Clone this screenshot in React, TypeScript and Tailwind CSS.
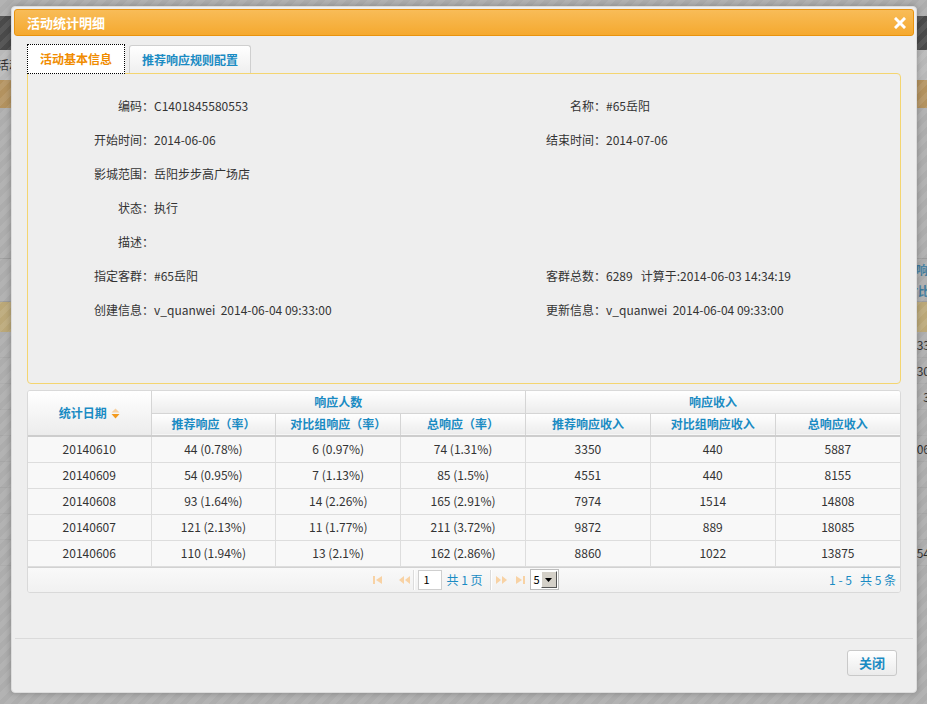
import React from 'react';

type Pair = [string, string] | null;

const infoRows: [Pair, Pair][] = [
  [['编码', 'C1401845580553'], ['名称', '#65岳阳']],
  [['开始时间', '2014-06-06'], ['结束时间', '2014-07-06']],
  [['影城范围', '岳阳步步高广场店'], null],
  [['状态', '执行'], null],
  [['描述', ''], null],
  [['指定客群', '#65岳阳'], ['客群总数', '6289   计算于:2014-06-03 14:34:19']],
  [['创建信息', 'v_quanwei  2014-06-04 09:33:00'], ['更新信息', 'v_quanwei  2014-06-04 09:33:00']],
];

const statRows = [
  ['20140610', '44 (0.78%)', '6 (0.97%)', '74 (1.31%)', '3350', '440', '5887'],
  ['20140609', '54 (0.95%)', '7 (1.13%)', '85 (1.5%)', '4551', '440', '8155'],
  ['20140608', '93 (1.64%)', '14 (2.26%)', '165 (2.91%)', '7974', '1514', '14808'],
  ['20140607', '121 (2.13%)', '11 (1.77%)', '211 (3.72%)', '9872', '889', '18085'],
  ['20140606', '110 (1.94%)', '13 (2.1%)', '162 (2.86%)', '8860', '1022', '13875'],
];

export default function App() {
  return (
    <div className="relative h-[704px] w-[927px] overflow-hidden bg-[#adadad] font-['Noto_Sans_CJK_SC','Noto_Sans',sans-serif] text-[12px] text-[#333]">
      <BackgroundPage />
      {/* dimmed striped mask over the page */}
      <div className="absolute inset-0 bg-[repeating-linear-gradient(135deg,rgba(255,255,255,0.08)_0px,rgba(255,255,255,0.08)_5px,transparent_5px,transparent_10px)]" />
      <Dialog />
    </div>
  );
}

// What peeks out beside the dialog: nav bar, breadcrumb, a list table.
function BackgroundPage() {
  return (
    <div className="flex h-full flex-col whitespace-nowrap text-[12px] text-[#2c2c2c]">
      <div className="h-[16px]" />
      <div className="h-[34px] bg-[#4a4a4a]" />
      <div className="flex h-[30px] items-center bg-[#b8b8b8]">
        <span className="-ml-[3px]">活动</span>
      </div>
      <div className="h-[28px] bg-[#b3925f]" />
      <div className="h-[150px]" />
      <div className="flex h-[22px] items-center border-t border-[#9c9c9c] pl-[916px] font-bold text-[#3d7a9c]">
        响应
      </div>
      <div className="flex h-[22px] items-center border-b border-[#9c9c9c] pl-[906px] font-bold text-[#3d7a9c]">
        对比组
      </div>
      <div className="h-[30px] bg-[#bba878]" />
      {['33', '30', '3', '', '06', '', '', '', '54'].map((v, i) => (
        <div
          key={i}
          className="flex h-[26px] items-center justify-end border-b border-[#a6a6a6]"
        >
          <span className="-mr-[3px]">{v}</span>
        </div>
      ))}
    </div>
  );
}

function Dialog() {
  return (
    <div className="absolute left-[11px] top-[6px] flex h-[687px] w-[906px] flex-col rounded-[4px] border border-[#dcdcdc] bg-[#eeeeee] p-[2px] shadow-[0_0_6px_rgba(0,0,0,0.25)]">
      <div className="flex h-[27px] items-center justify-between rounded-[3px] border border-[#e8930f] bg-[linear-gradient(to_bottom,#f8bc58,#f5a92f)] pl-[12px] pr-[7px]">
        <span className="text-[13px] font-bold text-white">活动统计明细</span>
        <svg width="12" height="12" viewBox="0 0 12 12">
          <path d="M2 2 L10 10 M10 2 L2 10" stroke="#fff" strokeWidth="3" strokeLinecap="square" />
        </svg>
      </div>

      <div className="px-[13px] pt-[8px]">
        <div className="flex h-[29px] items-end gap-[4px]">
          <div className="relative z-10 -mb-px flex h-[30px] w-[98px] items-center justify-center bg-white font-bold text-[#f08c00] outline-1 outline-dotted outline-black -outline-offset-1">
            活动基本信息
          </div>
          <div className="flex h-[28px] w-[122px] items-center justify-center rounded-t-[3px] border border-b-0 border-[#cfcfcf] bg-[linear-gradient(to_bottom,#ffffff,#efefef)] font-bold text-[#1a8bc3]">
            推荐响应规则配置
          </div>
        </div>

        <div className="rounded-b-[4px] rounded-tr-[4px] border border-[#f4d570] pb-[56px] pt-[15px]">
          <div className="grid grid-cols-[126px_311px_141px_1fr]">
            {infoRows.map(([l, r], i) => (
              <React.Fragment key={i}>
                <InfoCell pair={l} />
                <InfoCell pair={r} />
              </React.Fragment>
            ))}
          </div>
        </div>

        <StatsTable />
      </div>

      <div className="mx-[1px] mt-auto flex h-[52px] items-start justify-end border-t border-[#dadada] pr-[16px] pt-[11px]">
        <button className="h-[26px] w-[50px] rounded-[3px] border border-[#c9c9c9] bg-[linear-gradient(to_bottom,#ffffff,#ebebeb)] text-[13px] font-bold text-[#1a8bc3]">
          关闭
        </button>
      </div>
    </div>
  );
}

function InfoCell({ pair }: { pair: Pair }) {
  if (!pair) {
    return (
      <>
        <div className="h-[34px]" />
        <div className="h-[34px]" />
      </>
    );
  }
  return (
    <>
      <div className="flex h-[34px] items-center justify-end">{pair[0]}：</div>
      <div className="flex h-[34px] items-center whitespace-pre">{pair[1]}</div>
    </>
  );
}

function SortIcon() {
  return (
    <svg width="9" height="11" viewBox="0 0 9 11" className="ml-[4px]">
      <path d="M4.5 0.5 L8.5 4.5 L0.5 4.5 Z" fill="#f7cfa0" />
      <path d="M0.5 6 L8.5 6 L4.5 10.5 Z" fill="#f39a1e" />
    </svg>
  );
}

function StatsTable() {
  const th =
    'border-r border-b border-[#d5d5d5] bg-[linear-gradient(to_bottom,#ffffff,#ececec)] font-bold text-[#1a8bc3] last:border-r-0';
  const td = 'h-[26px] border-r border-b border-[#dddddd] text-center last:border-r-0';
  return (
    <div className="mt-[6px] overflow-hidden rounded-[3px] border border-[#d9d9d9] bg-[#f8f8f8]">
      <table className="w-full table-fixed border-collapse">
        <colgroup>
          <col className="w-[123px]" />
          <col />
          <col />
          <col />
          <col />
          <col />
          <col />
        </colgroup>
        <thead>
          <tr>
            <th rowSpan={2} className={`${th} border-b-2 border-b-[#cdcdcd]`}>
              <span className="inline-flex items-center">
                统计日期
                <SortIcon />
              </span>
            </th>
            <th colSpan={3} className={`${th} h-[22px]`}>响应人数</th>
            <th colSpan={3} className={`${th} h-[22px]`}>响应收入</th>
          </tr>
          <tr>
            {['推荐响应（率）', '对比组响应（率）', '总响应（率）', '推荐响应收入', '对比组响应收入', '总响应收入'].map(
              (h) => (
                <th key={h} className={`${th} h-[23px] border-b-2 border-b-[#cdcdcd]`}>
                  {h}
                </th>
              ),
            )}
          </tr>
        </thead>
        <tbody>
          {statRows.map((r) => (
            <tr key={r[0]}>
              {r.map((c, i) => (
                <td key={i} className={td}>
                  {c}
                </td>
              ))}
            </tr>
          ))}
        </tbody>
      </table>
      <Pager />
    </div>
  );
}

function PagerIcon({ d }: { d: string }) {
  return (
    <svg width="11" height="8" viewBox="0 0 11 8">
      <path d={d} fill="#f8d2a4" />
    </svg>
  );
}

function Pager() {
  return (
    <div className="grid h-[25px] grid-cols-[1fr_auto_1fr] items-center border-t border-[#d2d2d2] bg-[linear-gradient(to_bottom,#f9f9f9,#f1f1f1)]">
      <div />
      <div className="flex items-center">
        <div className="flex w-[44px] items-center justify-between px-[3px]">
          <PagerIcon d="M1 0 H3 V8 H1 Z M10 0 V8 L4 4 Z" />
          <PagerIcon d="M5 0 V8 L0 4 Z M11 0 V8 L6 4 Z" />
        </div>
        <div className="h-[20px] w-[2px] border-l border-r border-l-[#dcdcdc] border-r-white" />
        <div className="ml-[3px] flex h-[20px] w-[24px] items-center border border-[#cfcfcf] bg-white pl-[4px] text-[11px] text-black">
          1
        </div>
        <span className="ml-[4px] text-[#1a8bc3]">共 1 页</span>
        <div className="ml-[7px] h-[20px] w-[2px] border-l border-r border-l-[#dcdcdc] border-r-white" />
        <div className="flex w-[38px] items-center justify-between px-[4px]">
          <PagerIcon d="M0 0 V8 L5 4 Z M6 0 V8 L11 4 Z" />
          <PagerIcon d="M1 0 V8 L7 4 Z M8 0 H10 V8 H8 Z" />
        </div>
        <div className="flex h-[21px] w-[29px] items-center border border-[#bdbdbd] bg-white pl-[3px] text-[11px] text-black">
          <span className="w-[7px]">5</span>
          <div className="flex h-[17px] w-[16px] items-center justify-center border border-t-white border-l-white border-r-[#555] border-b-[#555] bg-[#d4d0c8]">
            <svg width="7" height="4" viewBox="0 0 7 4">
              <path d="M0 0 H7 L3.5 4 Z" fill="#000" />
            </svg>
          </div>
        </div>
      </div>
      <div className="flex justify-end whitespace-pre pr-[4px] text-[#1a8bc3]">1 - 5   共 5 条</div>
    </div>
  );
}
